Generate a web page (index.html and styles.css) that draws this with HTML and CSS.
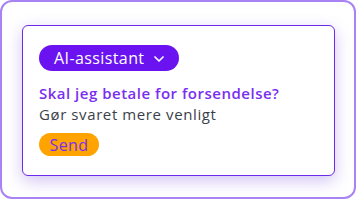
FILE: index.html
```html
<!DOCTYPE html>
<html lang="da">
<head>
<meta charset="utf-8">
<link rel="stylesheet" href="styles.css">
</head>
<body>
<div class="frame">
  <div class="card">
    <button class="pill">AI-assistant
      <svg class="chev" width="10" height="6" viewBox="0 0 10 6"><path d="M1 1 L5 5 L9 1" fill="none" stroke="#fff" stroke-width="1.7" stroke-linecap="round" stroke-linejoin="round"/></svg>
    </button>
    <p class="question">Skal jeg betale for forsendelse?</p>
    <p class="instruction">Gør svaret mere venligt</p>
    <button class="send">Send</button>
  </div>
</div>
</body>
</html>
```
FILE: styles.css
```css
html, body { margin: 0; padding: 0; background: #fff; }
body { font-family: "Open Sans", "DejaVu Sans", sans-serif; }
.frame {
  box-sizing: border-box;
  width: 356px;
  height: 199px;
  border: 2px solid #a983f4;
  border-radius: 12px;
  padding: 23px 0 0 20px;
}
.card {
  box-sizing: border-box;
  width: 313px;
  height: 151px;
  border: 1px solid #6d2ae8;
  border-radius: 6px;
  background: #fff;
  box-shadow: 0 5px 16px rgba(110, 60, 220, 0.3);
  padding: 19px 0 0 16px;
  display: flex;
  flex-direction: column;
  align-items: flex-start;
}
.pill {
  box-sizing: border-box;
  height: 26px;
  width: 140px;
  border: none;
  border-radius: 13px;
  background: #6a12ef;
  color: #fff;
  font-family: inherit;
  font-size: 16px;
  font-weight: 500;
  letter-spacing: 0.4px;
  padding: 0 0 0 15px;
  display: flex;
  align-items: center;
  gap: 10px;
}
.chev { margin-top: 1px; }
.question {
  margin: 12px 0 0 0;
  font-size: 15px;
  line-height: 21px;
  font-weight: 600;
  letter-spacing: 0.5px;
  color: #7a2ef2;
}
.instruction {
  margin: 0;
  font-size: 15px;
  line-height: 20px;
  letter-spacing: 0.6px;
  color: #3a3f4a;
}
.send {
  margin-top: 9px;
  box-sizing: border-box;
  height: 23px;
  width: 60px;
  border: none;
  border-radius: 12px;
  background: #ffa300;
  color: #7a2ef2;
  font-family: inherit;
  font-size: 16px;
  letter-spacing: 0.4px;
  padding: 0;
}
```
